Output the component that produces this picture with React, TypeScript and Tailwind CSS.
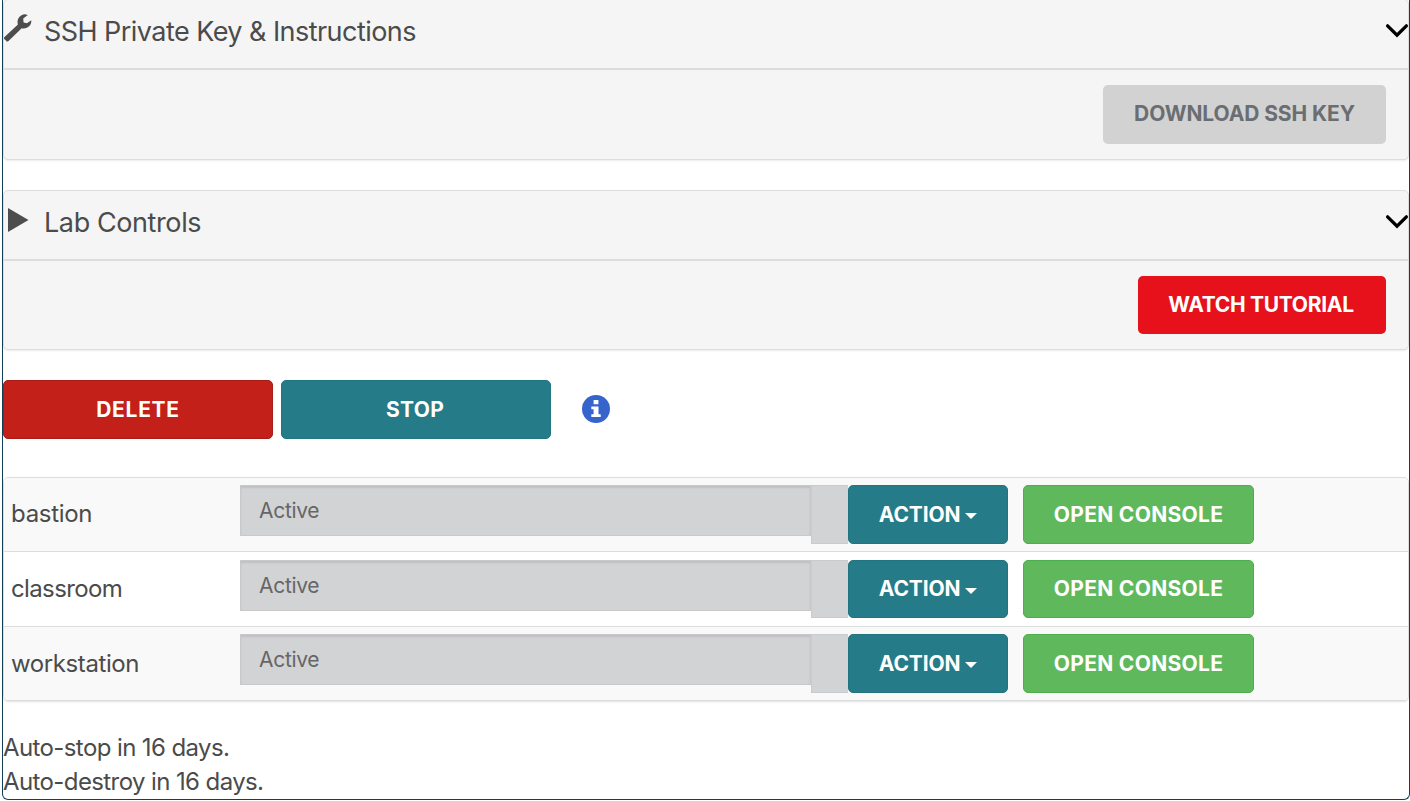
import { ReactNode } from 'react';

function Chevron() {
  return (
    <svg className="-mr-px h-[16px] w-[24px] shrink-0" viewBox="0 0 24 16" fill="none" stroke="#000" strokeWidth="3.3" strokeLinecap="round">
      <path d="M2.6 2.8 12 12.2 21.4 2.8" />
    </svg>
  );
}

function Wrench() {
  return (
    <svg className="-mt-[6px] h-[28px] w-[28px]" viewBox="0 0 28 28" fill="#4d4d4d">
      <path d="M0 23.6 13.9 10.4C12.4 5.2 16 0.6 21 0.3L23.8 1.1 19.2 4.6 19.6 8.5 22.9 9.2 27.3 6.3C27.8 11.6 22.9 15.6 17.7 14.3L4 27.6 2.9 27.6 0 24.8z" />
    </svg>
  );
}

function Play() {
  return (
    <svg className="-mt-[4px] ml-[4px] h-[26px] w-[21px]" viewBox="0 0 21 26" fill="#4d4d4d">
      <path d="M0 1v24L20.5 13z" />
    </svg>
  );
}

interface PanelProps {
  icon: ReactNode;
  title: ReactNode;
  headClass: string;
  children: ReactNode;
}

function Panel({ icon, title, headClass, children }: PanelProps) {
  return (
    <section className={`rounded-[5px] border border-[#ddd] bg-[#f5f5f5] shadow-[0_1px_2px_rgba(0,0,0,0.08)] ${headClass}`}>
      <div className="flex h-[70px] items-center border-b-2 border-[#dcdcdc] pb-[6px]">
        <div className="flex w-[40px] items-center">{icon}</div>
        <h2 className="flex-1 whitespace-nowrap pt-[2px] text-[27px]/[40px]">{title}</h2>
        <Chevron />
      </div>
      <div className="flex justify-end pr-[22px] pt-[15px]">{children}</div>
    </section>
  );
}

const machines = [
  { name: 'bastion', tracking: 'tracking-[-0.3px]', row: 'h-[74px] bg-[#f9f9f9] border-b', control: 'h-[59px]', label: 'text-[24px]/[58px]' },
  { name: 'classroom', tracking: 'tracking-[-0.63px]', row: 'h-[75px] bg-white border-b pt-[8px]', control: 'h-[58px]', label: 'text-[24px]/[58px]' },
  { name: 'workstation', tracking: 'tracking-[-0.4px]', row: 'h-[73px] bg-[#f9f9f9]', control: 'h-[59px]', label: 'text-[24px]/[60px]' },
];

export default function App() {
  return (
    <div className="h-[801px] overflow-hidden bg-white pl-[2px] font-['Inter','Liberation_Sans',sans-serif] text-[#4b4b4b]">
      <main className="h-[800px] overflow-hidden rounded-b-[6px] border border-t-0 border-[#123f55]">
        <div className="-mt-px">
          <Panel
            icon={<Wrench />}
            title={<span className="tracking-[-0.55px]">SSH Private Key &amp; Instructions</span>}
            headClass="h-[161px]"
          >
            <button className="h-[59px] w-[283px] whitespace-nowrap rounded-[5px] bg-[#d2d2d2] pb-[2px] text-[21px] font-bold text-[#6a6e73]">
              <span className="tracking-[-0.1px]">DOWNLOAD SSH KEY</span>
            </button>
          </Panel>
        </div>
        <div className="mt-[30px]">
          <Panel
            icon={<Play />}
            title={<span className="tracking-[-0.4px]">Lab Controls</span>}
            headClass="h-[160px]"
          >
            <button className="h-[58px] w-[248px] whitespace-nowrap rounded-[5px] bg-[#e6111a] pr-[2px] text-[21px] font-bold text-white">
              <span className="tracking-[-0.3px]">WATCH TUTORIAL</span>
            </button>
          </Panel>
        </div>
        <div className="mt-[30px] flex items-center">
          <button className="h-[59px] w-[270px] rounded-[5px] border border-[#a91b16] bg-[#c22019] text-[21px] font-bold text-white">
            <span className="tracking-[0.7px]">DELETE</span>
          </button>
          <button className="ml-[8px] h-[59px] w-[270px] rounded-[5px] border border-[#217581] bg-[#257b87] pr-[2px] text-[21px] font-bold text-white">
            <span className="tracking-[0.3px]">STOP</span>
          </button>
          <svg className="-mt-[2px] ml-[31px] h-[28px] w-[28px]" viewBox="0 0 28 28">
            <circle cx="14" cy="14" r="14" fill="#3664cd" />
            <path d="M11.6 5h4.8v4.2h-4.8zM9.3 11.6h7.2v7.7h2.2v2.6H9.3v-2.6h2.3v-5.1H9.3z" fill="#fff" />
          </svg>
        </div>
        <div className="mt-[38px] h-[224px] overflow-hidden rounded-[5px] border border-[#ddd] shadow-[0_1px_2px_rgba(0,0,0,0.12)]">
          {machines.map((m) => (
            <div key={m.name} className={`flex items-start border-[#ddd] pt-[7px] ${m.row}`}>
              <div className={`h-[58px] w-[236px] pl-[7px] ${m.label}`}>
                <span className={m.tracking}>{m.name}</span>
              </div>
              <div className="h-[51px] w-[571px] border border-[#c9c9cb] bg-[#d2d3d5] pl-[18px] text-[21px]/[50px] text-[#666] shadow-[inset_0_2px_2px_rgba(0,0,0,0.09)]">
                <span className="tracking-[-0.3px]">Active</span>
              </div>
              <div className={`w-[37px] border border-r-0 border-[#cacbcc] bg-[#d2d3d5] ${m.control}`} />
              <button className={`flex w-[160px] items-center justify-center gap-[5px] rounded-[5px] border border-[#217581] bg-[#257b87] text-[21px] font-bold text-white ${m.control}`}>
                <span className="tracking-[-0.15px]">ACTION</span>
                <svg className="mt-[3px] h-[6px] w-[12px]" viewBox="0 0 12 6" fill="#fff">
                  <path d="M0 0h12L6 6z" />
                </svg>
              </button>
              <button className={`ml-[15px] w-[231px] whitespace-nowrap rounded-[5px] border border-[#4cae4c] bg-[#5fb85c] text-[21px] font-bold text-white ${m.control}`}>
                <span className="tracking-[0.3px]">OPEN CONSOLE</span>
              </button>
            </div>
          ))}
        </div>
        <div className="mt-[30px] text-[24px]/[34px]">
          <p className="tracking-[-0.6px]">Auto-stop in 16 days.</p>
          <p className="tracking-[-0.6px]">Auto-destroy in 16 days.</p>
        </div>
      </main>
    </div>
  );
}
